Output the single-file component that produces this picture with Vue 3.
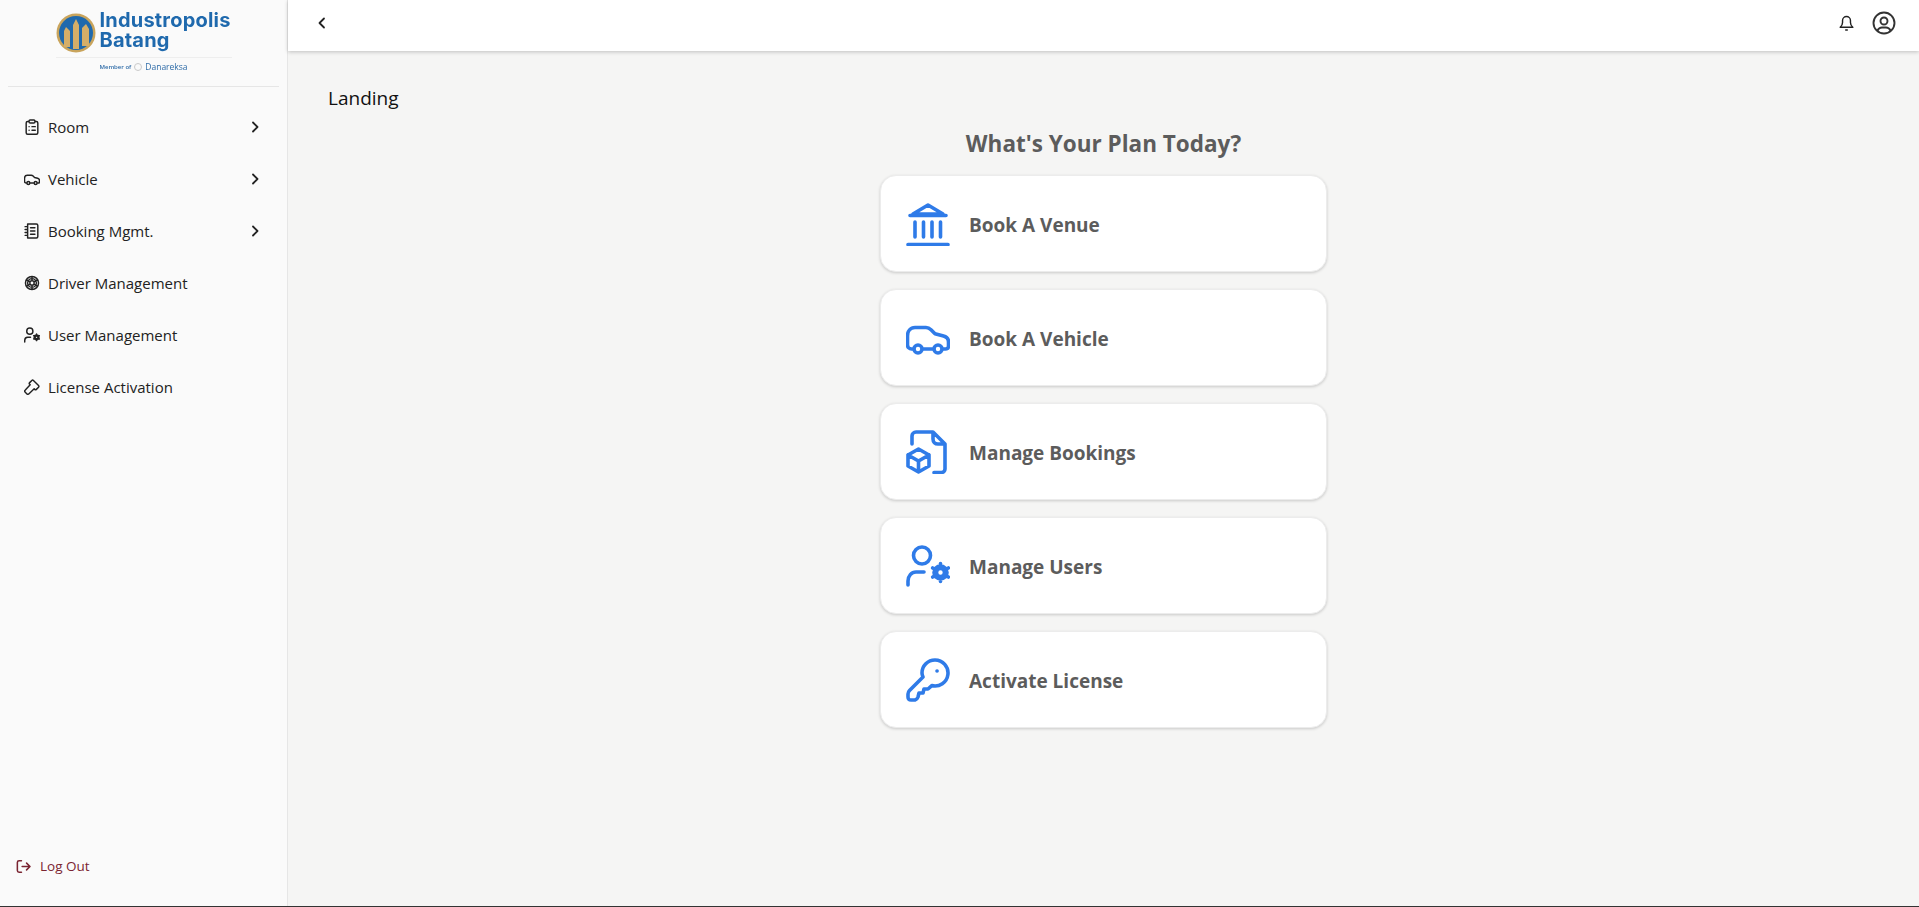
<script setup>
// icon outlines, drawn on a 44x44 grid
const icons = {
  room: 'M14 7H10a4 4 0 0 0-4 4v27a4 4 0 0 0 4 4h24a4 4 0 0 0 4-4V11a4 4 0 0 0-4-4h-4M14 7a3 3 0 0 1 3-4h10a3 3 0 0 1 3 4v1a3 3 0 0 1-3 3H17a3 3 0 0 1-3-3zM14 21h.1M22 21h9M14 31h.1M22 31h9',
  venue: 'M22 3 7 12h30zM4 13.5h36M9 20v15M17.5 20v15M26 20v15M34.5 20v15M2 42.5h40',
  car: 'M7 33H5.5A4 4 0 0 1 1.5 29V20c0-5 3-8.5 7.5-8.5h11c2 0 3.5.7 5 2.2l4 4 8.5 2.3c3 .8 5 3 5 6v4c0 2-1 3-3 3H37M16 33h12M12 29a4 4 0 1 0 0 8 4 4 0 0 0 0-8zM32 29a4 4 0 1 0 0 8 4 4 0 0 0 0-8z',
  file: 'M6 14V6a4 4 0 0 1 4-4h17l12 12v25a3.5 3.5 0 0 1-3.5 3.5H28M27 3v6c0 3 2 5 5 5h7M12.5 19 23 25v11l-10.5 6L2 36V25zM2 25l10.5 6L23 25M12.5 31v11',
  users: 'M16 3a8.5 8.5 0 1 0 0 17 8.5 8.5 0 0 0 0-17zM2 41v-4c0-5 3.5-9 8-9h8M34.5 22a6.500 6.500 0 1 0 0 13 6.500 6.500 0 0 0 0-13zM34.5 24.500a4 4 0 1 0 0 8 4 4 0 0 0 0-8zM34.5 19.500V23M34.5 34v3.500M26.700 24l3 1.750M39.300 31.250l3 1.750M26.700 33l3-1.750M39.300 25.750l3-1.750',
  key: 'M29 2a13 13 0 1 1-3.200 25.600L22 31h-4l-1 4h-4l-1 4c-.5 1.500-1.500 2.500-3 3H5c-2 0-3-1-3-3v-3c0-1.500.5-2.500 1.500-3.500L17 19c-.7-1.600-1-3.200-1-4A13 13 0 0 1 29 2zM31 13h.1',
  notebook: 'M10 3h24a4 4 0 0 1 4 4v30a4 4 0 0 1-4 4H10zM3 10h7M3 18h7M3 26h7M3 34h7M18 13h12M18 22h12M18 31h12',
  wheel: 'M22 4a18 18 0 1 0 0 36 18 18 0 0 0 0-36zM22 10a12 12 0 1 0 0 24 12 12 0 0 0 0-24zM22 16a6 6 0 1 0 0 12 6 6 0 0 0 0-12zM22 4v12M22 28v12M6 13l11 6M27 25l11 6M6 31l11-6M27 19l11-6',
  hammer: 'M26 4 40 18c1.500 1.500 1.500 3 0 4.500l-6 6c-1.500 1.500-3 1.500-4.500 0L28 27 13 41c-1.500 1.500-3.500 1.500-5 0l-5-5c-1.500-1.500-1.500-3.500 0-5l14-15-1.500-1.500c-1.500-1.500-1.500-3 0-4.500l6-6c1.500-1.500 3-1.500 4.500 0z',
  logout: 'M16 5H9a5 5 0 0 0-5 5v24a5 5 0 0 0 5 5h7M18 22h22M31 12l10 10-10 10',
};

const menu = [
  { label: 'Room', icon: 'room', more: true },
  { label: 'Vehicle', icon: 'car', more: true },
  { label: 'Booking Mgmt.', icon: 'notebook', more: true },
  { label: 'Driver Management', icon: 'wheel' },
  { label: 'User Management', icon: 'users' },
  { label: 'License Activation', icon: 'hammer' },
];

const plans = [
  { label: 'Book A Venue', icon: 'venue' },
  { label: 'Book A Vehicle', icon: 'car' },
  { label: 'Manage Bookings', icon: 'file' },
  { label: 'Manage Users', icon: 'users' },
  { label: 'Activate License', icon: 'key' },
];
</script>

<template>
  <div class="page">
    <aside class="sidebar">
      <div class="brand">
        <div class="brand-top">
          <svg class="brand-mark" viewBox="0 0 40 40">
            <circle cx="20" cy="20" r="19.5" fill="#c9a45c" />
            <circle cx="20" cy="20" r="17" fill="#1f69ad" />
            <path d="M20 6 23 12V36H17V12zM10 14l4 4V34H8V18zM30 11l3 5V33H26V15z" fill="#d5ae68" />
          </svg>
          <div class="brand-name">Industropolis<br />Batang</div>
        </div>
        <div class="brand-sub">
          <span class="member">Member of</span>
          <span class="dn-dot"></span>
          <span class="dn">Danareksa</span>
        </div>
      </div>

      <nav class="menu">
        <a v-for="m in menu" :key="m.label" class="menu-item">
          <svg class="menu-icon" viewBox="0 0 44 44"><path :d="icons[m.icon]" /></svg>
          <span class="menu-label">{{ m.label }}</span>
          <svg v-if="m.more" class="chevron" viewBox="0 0 12 12"><path d="M4 1.5 8.5 6 4 10.5" /></svg>
        </a>
      </nav>

      <a class="logout">
        <svg class="logout-icon" viewBox="0 0 44 44"><path :d="icons.logout" /></svg>
        Log Out
      </a>
    </aside>

    <div class="main">
      <header class="topbar">
        <svg class="back" viewBox="0 0 12 12"><path d="M8 1.5 3.5 6 8 10.5" /></svg>
        <div class="top-actions">
          <svg class="bell" viewBox="0 0 24 24">
            <path d="M4 18c2-1.500 3-3 3-6V9.500a5 5 0 0 1 10 0V12c0 3 1 4.500 3 6zM11 21.500h2" />
          </svg>
          <svg class="avatar" viewBox="0 0 24 24">
            <path d="M12 1.500a10.500 10.500 0 1 0 0 21 10.500 10.500 0 0 0 0-21zM12 6.500a3.500 3.500 0 1 0 0 7 3.500 3.500 0 0 0 0-7zM5.500 19.500c1-2 2.500-3 4.500-3h4c2 0 3.500 1 4.500 3" />
          </svg>
        </div>
      </header>

      <main class="content">
        <div class="crumb">Landing</div>
        <div class="plans">
          <h1 class="plans-title">What's Your Plan Today?</h1>
          <a v-for="p in plans" :key="p.label" class="plan-card">
            <svg class="plan-icon" viewBox="0 0 44 44"><path :d="icons[p.icon]" /></svg>
            <span class="plan-label">{{ p.label }}</span>
          </a>
        </div>
      </main>
    </div>
  </div>
</template>

<style>
html,
body {
  margin: 0;
  padding: 0;
}
</style>

<style scoped>
.page {
  display: flex;
  height: 907px;
  box-sizing: border-box;
  border-bottom: 1px solid #333;
  background: #f5f5f4;
  font-family: "Open Sans", "Noto Sans", sans-serif;
  color: #222;
  overflow: hidden;
}

.sidebar {
  width: 288px;
  flex-shrink: 0;
  box-sizing: border-box;
  background: #fafafa;
  border-right: 1px solid #e6e6e6;
  display: flex;
  flex-direction: column;
}

.brand {
  height: 87px;
  margin: 0 8px;
  box-sizing: border-box;
  border-bottom: 1px solid #e6e6e6;
  display: flex;
  flex-direction: column;
  align-items: center;
  padding-top: 9px;
  filter: blur(0.3px);
}

.brand-top {
  display: flex;
  align-items: center;
  gap: 4px;
  width: 176px;
  height: 47px;
  border-bottom: 1px solid #eeeeee;
  padding-bottom: 1px;
}

.brand-mark {
  width: 40px;
  height: 40px;
  flex-shrink: 0;
}

.brand-name {
  font-family: Inter, sans-serif;
  font-weight: 700;
  font-size: 20px;
  line-height: 20px;
  letter-spacing: 0.2px;
  color: #1f69ad;
  margin-bottom: 6px;
}

.brand-sub {
  display: flex;
  align-items: center;
  gap: 3px;
  margin-top: 3px;
  color: #2f6ca8;
}

.member {
  font-size: 6px;
  font-weight: 600;
}

.dn-dot {
  width: 8px;
  height: 8px;
  border-radius: 50%;
  border: 1px solid #c9c9c9;
  box-sizing: border-box;
}

.dn {
  font-size: 8.5px;
}

.menu {
  display: flex;
  flex-direction: column;
  margin-top: 14px;
}

.menu-item {
  height: 52px;
  display: flex;
  align-items: center;
  padding: 0 26px 0 24px;
}

.menu-icon {
  width: 16px;
  height: 16px;
  margin-right: 8px;
  fill: none;
  stroke: #222;
  stroke-width: 4;
  stroke-linecap: round;
  stroke-linejoin: round;
  flex-shrink: 0;
}

.menu-label {
  font-size: 15px;
  flex: 1;
}

.chevron {
  width: 12px;
  height: 12px;
  fill: none;
  stroke: #222;
  stroke-width: 1.8;
  stroke-linecap: round;
  stroke-linejoin: round;
}

.logout {
  margin-top: auto;
  margin-bottom: 31px;
  padding-left: 16px;
  display: flex;
  align-items: center;
  gap: 9px;
  font-size: 13.5px;
  color: #7a2431;
}

.logout-icon {
  width: 15px;
  height: 15px;
  fill: none;
  stroke: #7a2431;
  stroke-width: 4.5;
  stroke-linecap: round;
  stroke-linejoin: round;
}

.main {
  flex: 1;
  min-width: 0;
  display: flex;
  flex-direction: column;
}

.topbar {
  height: 51px;
  flex-shrink: 0;
  box-sizing: border-box;
  background: #fff;
  box-shadow: 0 1px 4px rgba(0, 0, 0, 0.22);
  display: flex;
  align-items: center;
  justify-content: space-between;
  padding: 0 23px 6px 28px;
}

.back {
  width: 12px;
  height: 12px;
  fill: none;
  stroke: #222;
  stroke-width: 1.8;
  stroke-linecap: round;
  stroke-linejoin: round;
}

.top-actions {
  display: flex;
  align-items: center;
  gap: 16px;
}

.bell {
  width: 19px;
  height: 19px;
  fill: none;
  stroke: #222;
  stroke-width: 1.8;
  stroke-linecap: round;
  stroke-linejoin: round;
}

.avatar {
  width: 24px;
  height: 24px;
  fill: none;
  stroke: #333;
  stroke-width: 1.9;
  stroke-linecap: round;
  stroke-linejoin: round;
}

.content {
  flex: 1;
  padding: 34px 40px 0;
}

.crumb {
  font-size: 19px;
  line-height: 26px;
  color: #111;
}

.plans {
  width: 447px;
  margin: 18px auto 0;
  display: flex;
  flex-direction: column;
  gap: 18px;
}

.plans-title {
  margin: 0 0 -2px;
  text-align: center;
  font-size: 22.5px;
  line-height: 30px;
  font-weight: 700;
  color: #5c5c5c;
}

.plan-card {
  height: 97px;
  box-sizing: border-box;
  background: #fff;
  border: 1px solid #ececec;
  border-radius: 16px;
  box-shadow: 0 1px 3px rgba(0, 0, 0, 0.18);
  display: flex;
  align-items: center;
  gap: 19px;
  padding-left: 25px;
  font-size: 19px;
  font-weight: 700;
  color: #5c5c5c;
}

.plan-card + .plan-card {
  margin-top: -1px;
}

.plan-label {
  padding-top: 2px;
}

.plan-icon {
  width: 44px;
  height: 44px;
  flex-shrink: 0;
  fill: none;
  stroke: #2f7be8;
  stroke-width: 3.6;
  stroke-linecap: round;
  stroke-linejoin: round;
}
</style>
